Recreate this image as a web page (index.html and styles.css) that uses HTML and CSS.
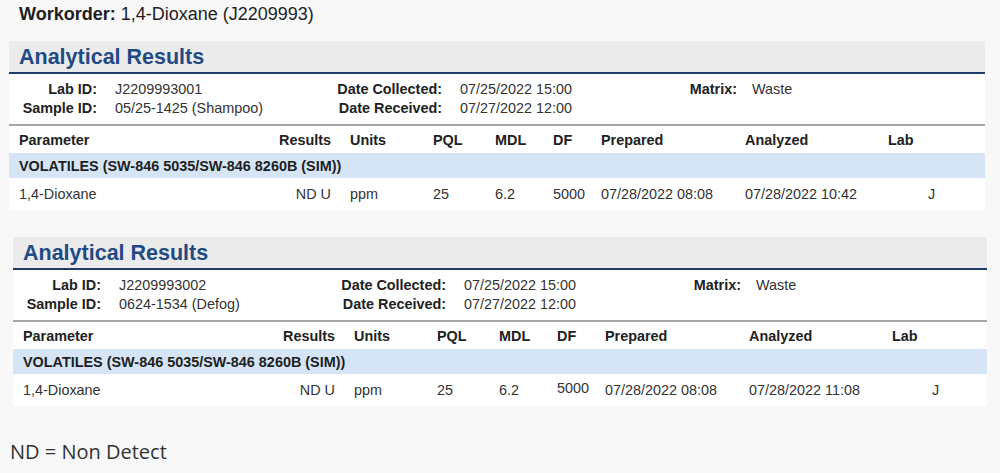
FILE: index.html
```html
<!DOCTYPE html>
<html>
<head>
<meta charset="utf-8">
<link rel="stylesheet" href="styles.css">
</head>
<body>
<div class="workorder"><b>Workorder:</b> 1,4-Dioxane (J2209993)</div>

<section class="panel">
  <div class="panel-head">Analytical Results</div>
  <div class="info">
    <span class="lbl">Lab ID:</span><span class="val">J2209993001</span>
    <span class="lbl">Date Collected:</span><span class="val">07/25/2022 15:00</span>
    <span class="lbl">Matrix:</span><span class="val val-m">Waste</span>
    <span class="lbl">Sample ID:</span><span class="val">05/25-1425 (Shampoo)</span>
    <span class="lbl">Date Received:</span><span class="val">07/27/2022 12:00</span>
    <span class="lbl"></span><span class="val"></span>
  </div>
  <table class="results">
    <colgroup>
      <col class="c-param"><col class="c-res"><col class="c-units"><col class="c-pql"><col class="c-mdl"><col class="c-df"><col class="c-prep"><col class="c-anal"><col class="c-lab">
    </colgroup>
    <thead>
      <tr><th class="param">Parameter</th><th class="res">Results</th><th>Units</th><th>PQL</th><th>MDL</th><th>DF</th><th>Prepared</th><th>Analyzed</th><th>Lab</th></tr>
    </thead>
    <tbody>
      <tr class="group"><td colspan="9">VOLATILES (SW-846 5035/SW-846 8260B (SIM))</td></tr>
      <tr class="data"><td class="param">1,4-Dioxane</td><td class="res">ND U</td><td>ppm</td><td>25</td><td>6.2</td><td>5000</td><td>07/28/2022 08:08</td><td>07/28/2022 10:42</td><td class="lab">J</td></tr>
    </tbody>
  </table>
</section>

<section class="panel panel-2">
  <div class="panel-head">Analytical Results</div>
  <div class="info">
    <span class="lbl">Lab ID:</span><span class="val">J2209993002</span>
    <span class="lbl">Date Collected:</span><span class="val">07/25/2022 15:00</span>
    <span class="lbl">Matrix:</span><span class="val val-m">Waste</span>
    <span class="lbl">Sample ID:</span><span class="val">0624-1534 (Defog)</span>
    <span class="lbl">Date Received:</span><span class="val">07/27/2022 12:00</span>
    <span class="lbl"></span><span class="val"></span>
  </div>
  <table class="results">
    <colgroup>
      <col class="c-param"><col class="c-res"><col class="c-units"><col class="c-pql"><col class="c-mdl"><col class="c-df"><col class="c-prep"><col class="c-anal"><col class="c-lab">
    </colgroup>
    <thead>
      <tr><th class="param">Parameter</th><th class="res">Results</th><th>Units</th><th>PQL</th><th>MDL</th><th>DF</th><th>Prepared</th><th>Analyzed</th><th>Lab</th></tr>
    </thead>
    <tbody>
      <tr class="group"><td colspan="9">VOLATILES (SW-846 5035/SW-846 8260B (SIM))</td></tr>
      <tr class="data"><td class="param">1,4-Dioxane</td><td class="res">ND U</td><td>ppm</td><td>25</td><td>6.2</td><td class="raised">5000</td><td>07/28/2022 08:08</td><td>07/28/2022 11:08</td><td class="lab">J</td></tr>
    </tbody>
  </table>
</section>

<p class="note">ND = Non Detect</p>
</body>
</html>
```

FILE: styles.css
```css
* { box-sizing: border-box; }

body {
  margin: 0;
  background: #f8f8f8;
  font-family: "Liberation Sans", Arial, sans-serif;
  color: #222;
}

.workorder {
  padding: 4px 0 0 19px;
  font-size: 18px;
  line-height: 21px;
  height: 41px;
  color: #1e1e1e;
}

.panel {
  margin-left: 9px;
  width: 976px;
  background: #fff;
}

.panel-2 {
  margin-left: 13px;
  width: 974px;
  margin-top: 27px;
}

.panel-head {
  height: 33px;
  background: #ebebeb;
  border-bottom: 2px solid #1f3a6b;
  padding-left: 10px;
  font-size: 21.5px;
  font-weight: bold;
  line-height: 32px;
  color: #1f4a86;
}

.info {
  display: grid;
  grid-template-columns: 88px 212px 133px 227px 68px 1fr;
  grid-auto-rows: 19px;
  padding: 6px 0 6px;
  border-bottom: 2px solid #a6a6a6;
  font-size: 14.4px;
  line-height: 19px;
  white-space: nowrap;
}

.lbl {
  text-align: right;
  font-weight: bold;
  color: #222;
}

.val {
  padding-left: 18px;
  color: #333;
}

.val-m { padding-left: 15px; }

.results {
  width: 100%;
  border-collapse: collapse;
  table-layout: fixed;
  font-size: 14.4px;
  white-space: nowrap;
}

.c-param { width: 260px; }
.c-res { width: 81px; }
.c-units { width: 83px; }
.c-pql { width: 62px; }
.c-mdl { width: 58px; }
.c-df { width: 48px; }
.c-prep { width: 144px; }
.c-anal { width: 143px; }
.c-lab { width: auto; }

.results th,
.results td {
  padding: 0;
  text-align: left;
  vertical-align: middle;
}

.results th {
  height: 27px;
  font-weight: bold;
  color: #222;
}

.results .param { padding-left: 10px; }
.results .res { text-align: right; padding-right: 19px; }

.group td {
  height: 25px;
  background: #d5e5f6;
  padding-left: 10px;
  font-weight: bold;
  color: #1e1e1e;
}

.data td {
  height: 32px;
  color: #333;
}

.data .lab { padding-left: 40px; }

.data .raised { padding-bottom: 5px; }

.note {
  margin: 0;
  padding: 32px 0 0 10px;
  font-family: "Open Sans", "Noto Sans", sans-serif;
  font-size: 20px;
  line-height: 27px;
  color: #333;
}
```
